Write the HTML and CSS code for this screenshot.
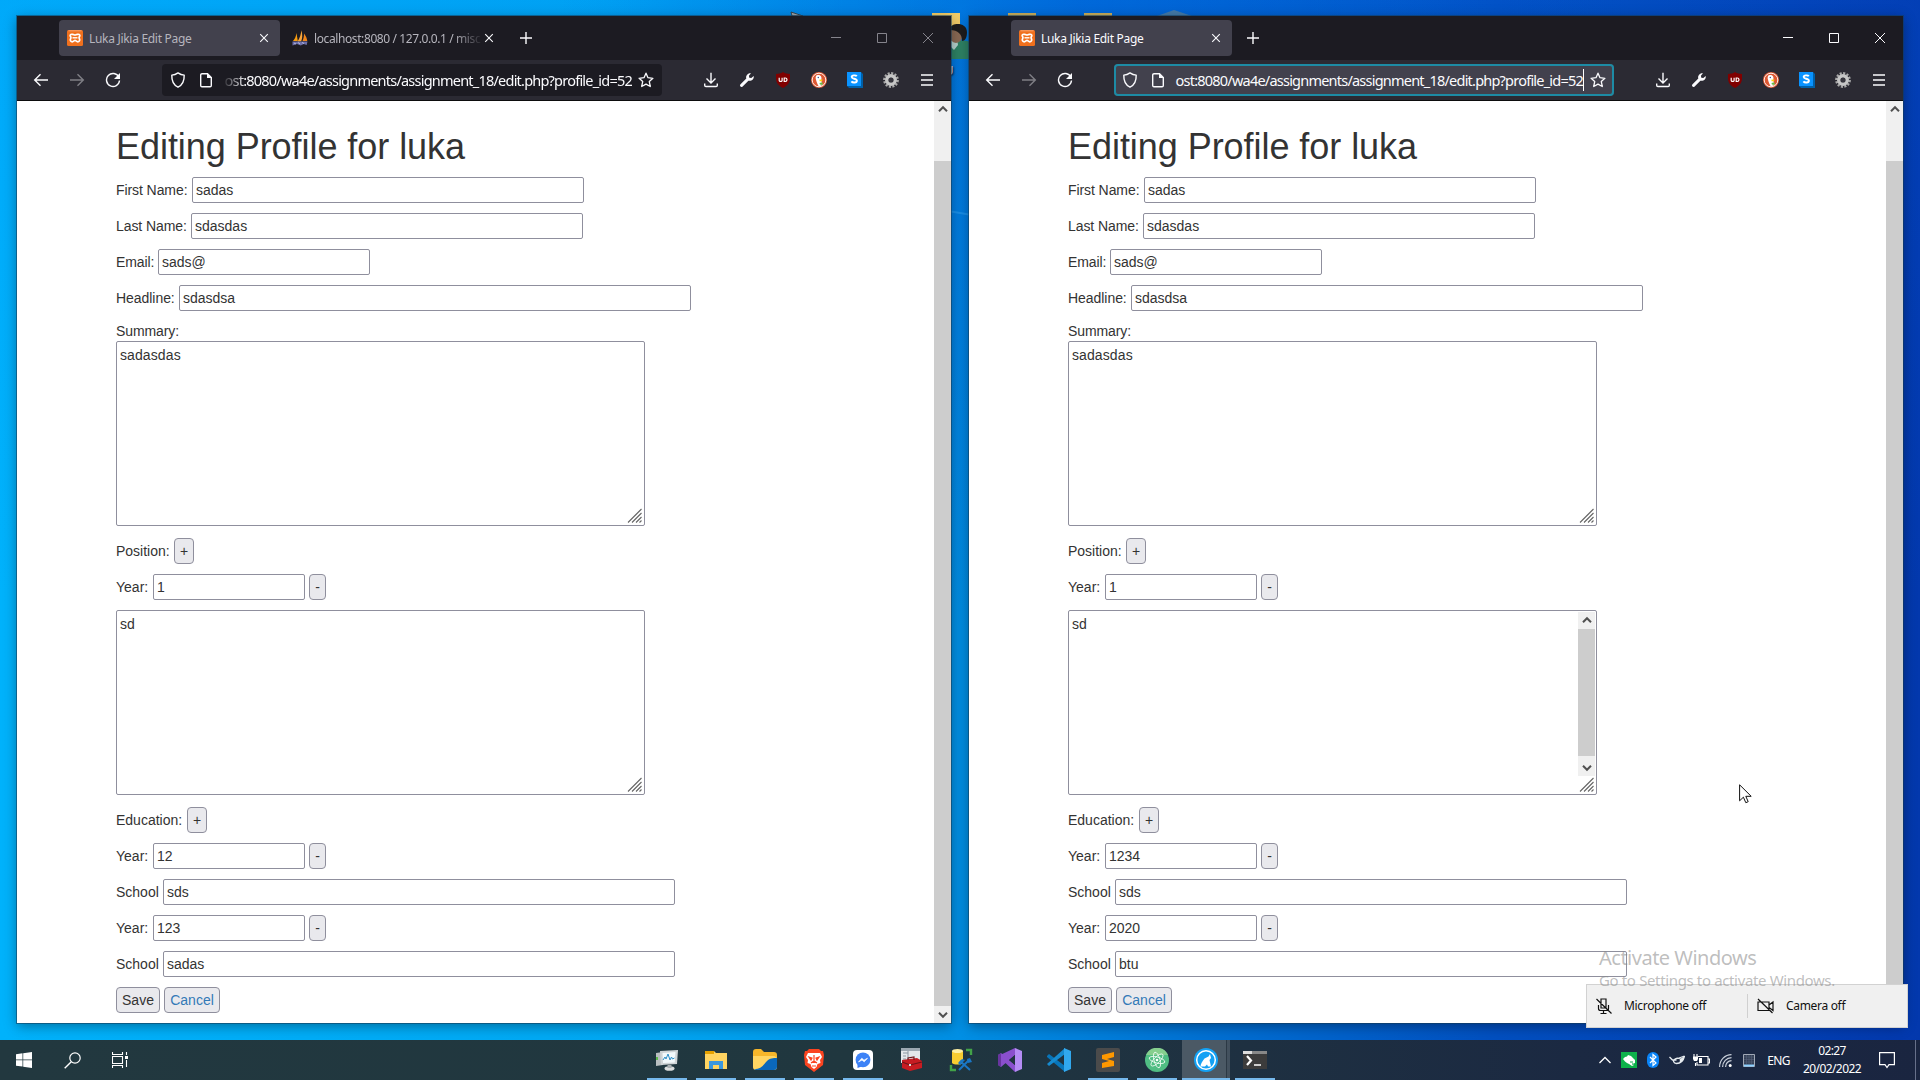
FILE: index.html
```html
<!DOCTYPE html>
<html lang="en">
<head>
<meta charset="utf-8">
<title>Desktop</title>
<link rel="stylesheet" href="styles.css">
</head>
<body>
<svg class="defs" aria-hidden="true">
  <symbol id="xampp" viewBox="0 0 16 16"><rect width="16" height="16" rx="1.5" fill="#f0701d"/><path d="M1.5.8h13" stroke="#f9b388" stroke-width=".8"/><path d="M4.600 4.300h1.200c1 0 1.400.7 2.200.7s1.200-.7 2.200-.7h1.200c1.200 0 1.700.9 1.300 1.800-.4.700-.9 1.200-.6 1.900 1.200 1.800.5 3.800-1.200 3.800-1.500 0-2.100-1.400-2.900-1.400s-1.400 1.400-2.900 1.400c-1.700 0-2.400-2-1.200-3.800.3-.7-.2-1.200-.6-1.900-.4-.9.1-1.800 1.300-1.800z" fill="none" stroke="#fff" stroke-width="1.700"/><path d="M5.500 7.800h5" stroke="#fff" stroke-width="1.400"/></symbol>
  <symbol id="pma" viewBox="0 0 16 16"><path d="M1 11C3 9 4 6 4.500 3l1.300 8z" fill="#f89c0e"/><path d="M5.500 11.500C8 8 9 4 9.300.3c1.400 4 1.200 8-.1 11z" fill="#f9a63a"/><path d="M10.500 11c1.200-3 1.600-5 1.500-7.500 2 2.500 3 5 3.300 7.500z" fill="#f0861a"/><path d="M.5 11.500h15l-.8 3.500-3-1-3 1.500L5 14l-4.500 1.500z" fill="#6d6fa8"/><path d="M2 13l2 1M6 12.500l2 1.500M10 12.500l2 1" stroke="#c9cae8" stroke-width=".8"/></symbol>
  <symbol id="x" viewBox="0 0 16 16"><path d="M4.200 4.200l7.600 7.600M11.800 4.200l-7.600 7.600" stroke="currentColor" stroke-width="1.100"/></symbol>
  <symbol id="plus" viewBox="0 0 16 16"><path d="M8 2v12M2 8h12" stroke="currentColor" stroke-width="1.400"/></symbol>
  <symbol id="min" viewBox="0 0 16 16"><path d="M3 7.500h10" stroke="currentColor"/></symbol>
  <symbol id="max" viewBox="0 0 16 16"><path d="M3.500 3.500h9v9h-9z" fill="none" stroke="currentColor"/></symbol>
  <symbol id="close" viewBox="0 0 16 16"><path d="M3 3l10 10M13 3L3 13" stroke="currentColor"/></symbol>
  <symbol id="back" viewBox="0 0 16 16"><path d="M15 8H1.700M7.500 2.200L1.700 8l5.800 5.800" fill="none" stroke="currentColor" stroke-width="1.400"/></symbol>
  <symbol id="reload" viewBox="0 0 16 16"><path d="M13.800 5A6.500 6.500 0 1 0 14.500 8.500" fill="none" stroke="currentColor" stroke-width="1.400"/><path d="M15 1v6H9z" fill="currentColor"/></symbol>
  <symbol id="shield" viewBox="0 0 16 16"><path d="M8 .9C6 2.300 4 3 1.800 3.100 1.600 9 3.500 13.200 8 15.200c4.500-2 6.400-6.200 6.200-12.100C12 3 10 2.300 8 .9z" fill="none" stroke="currentColor" stroke-width="1.400" stroke-linejoin="round"/></symbol>
  <symbol id="page" viewBox="0 0 16 16"><path d="M9.500 1.700H4A1.300 1.300 0 0 0 2.700 3v10.500c0 .7.600 1.200 1.300 1.200h8c.7 0 1.300-.5 1.300-1.200v-8z" fill="none" stroke="currentColor" stroke-width="1.400"/><path d="M9 1v5h5z" fill="currentColor"/></symbol>
  <symbol id="star" viewBox="0 0 16 16"><path d="M8 1.200l2 4.500 4.900.6-3.600 3.300 1 4.900L8 12.100l-4.300 2.400 1-4.900L1.100 6.300 6 5.700z" fill="none" stroke="currentColor" stroke-width="1.300" stroke-linejoin="round"/></symbol>
  <symbol id="down" viewBox="0 0 16 16"><path d="M8 .8v10M3.500 6.500L8 11l4.500-4.500M1.700 11.500v1.800c0 .7.500 1.200 1.200 1.200h10.200c.7 0 1.200-.5 1.200-1.200v-1.800" fill="none" stroke="currentColor" stroke-width="1.400"/></symbol>
  <symbol id="wrench" viewBox="0 0 16 16"><path d="M1.300 12.600l6-6C6.500 3.500 9 .7 12 1.300L9.900 3.700l.4 2 2 .4 2.400-2.100c.6 3-2.200 5.500-5.300 4.700l-6 6a1.500 1.500 0 0 1-2.100-2.100z" fill="currentColor"/></symbol>
  <symbol id="ublock" viewBox="0 0 16 16"><path d="M8 0c2 1.500 4.500 1.700 7 2v4.500c0 4.500-3 7.500-7 9.500-4-2-7-5-7-9.500V2c2.500-.3 5-.5 7-2z" fill="#800000"/><path d="M4.200 5.800v2.600c0 1.400 2.900 1.400 2.900 0V5.800M9.200 6v3.500h1c2.400 0 2.400-3.500 0-3.500z" fill="none" stroke="#fff" stroke-width="1.200"/></symbol>
  <symbol id="ddg" viewBox="0 0 16 16"><circle cx="8" cy="8" r="8" fill="#de5833"/><circle cx="8" cy="8" r="6.800" fill="none" stroke="#fff" stroke-width=".9"/><path d="M5 4c1-1.500 4.500-1.500 5.300 1 .6 2-.5 3 .2 4.500l1 3.500-3.700 1.500C6 11.500 5 8 4.600 6z" fill="#fff"/><path d="M8.500 7.500l3.500.3-1.500 1.400-2 .1z" fill="#fdd20a"/><path d="M8.500 11l3-.8v2.800l-2.600-.5z" fill="#65bc46"/><circle cx="7.300" cy="5.500" r=".7" fill="#2d4f8e"/></symbol>
  <symbol id="sblue" viewBox="0 0 16 16"><path d="M0 0h14l2 2v14H2l-2-2z" fill="#0060a8"/><path d="M0 0h14v14H0z" fill="#0a93ff"/><path d="M9.800 4.200C9 3 4.700 2.900 4.700 5c0 2.300 5.200 1.200 5.200 3.800 0 2.200-4.300 2.200-5.500.6" fill="none" stroke="#fff" stroke-width="1.900"/></symbol>
  <symbol id="gear" viewBox="0 0 16 16"><circle cx="8" cy="8" r="6.700" fill="none" stroke="#a9a9a9" stroke-width="2.400" stroke-dasharray="2.100 1.400"/><circle cx="8" cy="8" r="4.300" fill="none" stroke="#c6c6c6" stroke-width="3.400"/><circle cx="8" cy="8" r="2.200" fill="#38373f"/></symbol>
  <symbol id="menu" viewBox="0 0 16 16"><path d="M2 3h12M2 8h12M2 13h12" stroke="currentColor" stroke-width="1.400"/></symbol>
  <symbol id="up" viewBox="0 0 10 8"><path d="M1 6.200l4-4 4 4" fill="none" stroke="#505050" stroke-width="2"/></symbol>
  <symbol id="dn" viewBox="0 0 10 8"><path d="M1 1.800l4 4 4-4" fill="none" stroke="#505050" stroke-width="2"/></symbol>
  <symbol id="grip" viewBox="0 0 15 15"><path d="M1 14.500L14.500 1M5 14.500L14.500 5M9 14.500L14.500 9M12.500 14.500l2-2" stroke="#666" stroke-width="1.100"/></symbol>
</svg>

<div class="desktop">
  <div class="desk-icons">
    <svg width="180" height="90" viewBox="0 0 180 90" overflow="visible">
      <path d="M6 12l12 4H7z" fill="#9aa7b0" stroke="#333" stroke-width=".8"/>
      <path d="M147 13h28v30h-28z" fill="#f3cd68"/>
      <path d="M223 13h28v8h-28z" fill="#c9ae5c"/>
      <path d="M163 59v-13c4-7 22-7 24-2l2 15z" fill="#2f8466"/><path d="M165 46l4 4 4-5-1-6h-7z" fill="#b7d4cf"/><ellipse cx="171" cy="34" rx="7" ry="9" fill="#8c6b56"/><path d="M165 28c2-6 17-6 17 4 0 6-2 9-5 9 0-7-4-11-12-11z" fill="#1f1d1e"/>
    </svg>
    <span class="desk-label">U</span>
  </div>
  <div class="desk-icons right-icons"><svg width="180" height="20" viewBox="0 0 180 20"><path d="M18 13h28v6H18z" fill="#c9ae5c"/><path d="M91 16l17-6 18 6v4H91z" fill="#447aa8"/></svg></div>
  <div class="ray"></div>

  <section class="window first">
    <header class="tabs">
      <div class="tab active"><svg class="i16"><use href="#xampp"/></svg><span class="tab-title">Luka Jikia Edit Page</span><svg class="i16"><use href="#x"/></svg></div>
      <div class="tab"><svg class="i16"><use href="#pma"/></svg><span class="tab-title cut">localhost:8080 / 127.0.0.1 / misc</span><svg class="i16"><use href="#x"/></svg></div>
      <svg class="i16 newtab"><use href="#plus"/></svg>
      <div class="controls"><svg class="i16"><use href="#min"/></svg><svg class="i16"><use href="#max"/></svg><svg class="i16"><use href="#close"/></svg></div>
    </header>
    <nav class="toolbar">
      <span class="slot"><svg class="i16"><use href="#back"/></svg></span><span class="slot off flip"><svg class="i16"><use href="#back"/></svg></span><span class="slot"><svg class="i16"><use href="#reload"/></svg></span>
      <div class="url"><svg class="i16"><use href="#shield"/></svg><svg class="i16 page-ic"><use href="#page"/></svg><div class="address"><span>ost:8080/wa4e/assignments/assignment_18/edit.php?profile_id=52</span></div><svg class="i16"><use href="#star"/></svg></div>
      <span class="slot"><svg class="i16"><use href="#down"/></svg></span><span class="slot"><svg class="i16"><use href="#wrench"/></svg></span><span class="slot"><svg class="i16"><use href="#ublock"/></svg></span><span class="slot"><svg class="i16"><use href="#ddg"/></svg></span><span class="slot"><svg class="i16"><use href="#sblue"/></svg></span><span class="slot"><svg class="i16"><use href="#gear"/></svg></span><span class="slot"><svg class="i16"><use href="#menu"/></svg></span>
    </nav>
    <div class="body">
      <main class="form">
        <h1>Editing Profile for luka</h1>
        <div class="row"><label class="l-first">First Name:</label><div class="field name">sadas</div></div>
        <div class="row"><label class="l-last">Last Name:</label><div class="field name">sdasdas</div></div>
        <div class="row"><label class="l-email">Email:</label><div class="field email">sads@</div></div>
        <div class="row"><label class="l-head">Headline:</label><div class="field long">sdasdsa</div></div>
        <div class="caption">Summary:</div>
        <div class="area">sadasdas<svg class="grip"><use href="#grip"/></svg></div>
        <div class="row after"><label class="l-pos">Position:</label><div class="btn add">+</div></div>
        <div class="row"><label class="l-year">Year:</label><div class="field year">1</div><div class="btn del">-</div></div>
        <div class="area spaced">sd<svg class="grip"><use href="#grip"/></svg></div>
        <div class="row after"><label class="l-edu">Education:</label><div class="btn add">+</div></div>
        <div class="row"><label class="l-year">Year:</label><div class="field year">12</div><div class="btn del">-</div></div>
        <div class="row"><label class="l-school">School</label><div class="field long">sds</div></div>
        <div class="row"><label class="l-year">Year:</label><div class="field year">123</div><div class="btn del">-</div></div>
        <div class="row"><label class="l-school">School</label><div class="field long">sadas</div></div>
        <div class="row"><div class="btn save">Save</div><div class="btn cancel">Cancel</div></div>
      </main>
      <aside class="scroll"><svg class="arrow"><use href="#up"/></svg><div class="thumb"></div><svg class="arrow"><use href="#dn"/></svg></aside>
    </div>
  </section>

  <section class="window second">
    <header class="tabs">
      <div class="tab active"><svg class="i16"><use href="#xampp"/></svg><span class="tab-title">Luka Jikia Edit Page</span><svg class="i16"><use href="#x"/></svg></div>
      <svg class="i16 newtab"><use href="#plus"/></svg>
      <div class="controls"><svg class="i16"><use href="#min"/></svg><svg class="i16"><use href="#max"/></svg><svg class="i16"><use href="#close"/></svg></div>
    </header>
    <nav class="toolbar">
      <span class="slot"><svg class="i16"><use href="#back"/></svg></span><span class="slot off flip"><svg class="i16"><use href="#back"/></svg></span><span class="slot"><svg class="i16"><use href="#reload"/></svg></span>
      <div class="url focus"><svg class="i16"><use href="#shield"/></svg><svg class="i16 page-ic"><use href="#page"/></svg><div class="address caret"><span>ost:8080/wa4e/assignments/assignment_18/edit.php?profile_id=52</span></div><svg class="i16"><use href="#star"/></svg></div>
      <span class="slot"><svg class="i16"><use href="#down"/></svg></span><span class="slot"><svg class="i16"><use href="#wrench"/></svg></span><span class="slot"><svg class="i16"><use href="#ublock"/></svg></span><span class="slot"><svg class="i16"><use href="#ddg"/></svg></span><span class="slot"><svg class="i16"><use href="#sblue"/></svg></span><span class="slot"><svg class="i16"><use href="#gear"/></svg></span><span class="slot"><svg class="i16"><use href="#menu"/></svg></span>
    </nav>
    <div class="body">
      <main class="form">
        <h1>Editing Profile for luka</h1>
        <div class="row"><label class="l-first">First Name:</label><div class="field name">sadas</div></div>
        <div class="row"><label class="l-last">Last Name:</label><div class="field name">sdasdas</div></div>
        <div class="row"><label class="l-email">Email:</label><div class="field email">sads@</div></div>
        <div class="row"><label class="l-head">Headline:</label><div class="field long">sdasdsa</div></div>
        <div class="caption">Summary:</div>
        <div class="area">sadasdas<svg class="grip"><use href="#grip"/></svg></div>
        <div class="row after"><label class="l-pos">Position:</label><div class="btn add">+</div></div>
        <div class="row"><label class="l-year">Year:</label><div class="field year">1</div><div class="btn del">-</div></div>
        <div class="area spaced scrolling"><span>sd</span><div class="inner-scroll"><svg class="arrow"><use href="#up"/></svg><div class="thumb"></div><svg class="arrow"><use href="#dn"/></svg></div><svg class="grip"><use href="#grip"/></svg></div>
        <div class="row after"><label class="l-edu">Education:</label><div class="btn add">+</div></div>
        <div class="row"><label class="l-year">Year:</label><div class="field year">1234</div><div class="btn del">-</div></div>
        <div class="row"><label class="l-school">School</label><div class="field long">sds</div></div>
        <div class="row"><label class="l-year">Year:</label><div class="field year">2020</div><div class="btn del">-</div></div>
        <div class="row"><label class="l-school">School</label><div class="field long">btu</div></div>
        <div class="row"><div class="btn save">Save</div><div class="btn cancel">Cancel</div></div>
      </main>
      <aside class="scroll"><svg class="arrow"><use href="#up"/></svg><div class="thumb"></div><svg class="arrow"><use href="#dn"/></svg></aside>
    </div>
  </section>

  <div class="toast">
    <div class="toast-item mic"><svg width="16" height="16" viewBox="0 0 16 16"><path d="M5 1h5v9H5zM2.500 7v3.500c0 1 1 2 2 2h6c1 0 2-1 2-2V7M7.500 12.500v3M4.500 15.500h6M.5 1l15 14.500" fill="none" stroke="#111" stroke-width="1.200"/></svg><span>Microphone off</span></div>
    <div class="toast-item cam"><svg width="17" height="16" viewBox="0 0 17 16"><path d="M1 4h11v8.500H1zM12 7l4-3v8.500l-4-3M1 1l14.500 14" fill="none" stroke="#111" stroke-width="1.200"/></svg><span>Camera off</span></div>
  </div>
  <div class="activate"><div class="act-title">Activate Windows</div><div class="act-sub">Go to Settings to activate Windows.</div></div>
  <svg class="cursor" width="14" height="20" viewBox="0 0 14 20"><path d="M.6.8v16l3.800-3.600 2.400 5.500 2.400-1-2.400-5.400h5.400z" fill="#fff" stroke="#111" stroke-width="1"/></svg>
</div>

<footer class="taskbar">
  <div class="sys">
    <span><svg width="16" height="16" viewBox="0 0 16 16"><path d="M0 2.200l6.500-.9v6.200H0zM7.200 1.200L16 0v7.500H7.200zM0 8.300h6.500v6.300L0 13.800zM7.200 8.300H16V16l-8.800-1.200z" fill="#fff"/></svg></span>
    <span><svg width="17" height="17" viewBox="0 0 17 17"><circle cx="11" cy="6" r="5.200" fill="none" stroke="#fff" stroke-width="1.200"/><path d="M7.300 9.700L.7 16.300" stroke="#fff" stroke-width="1.400"/></svg></span>
    <span><svg width="17" height="16" viewBox="0 0 17 16"><path d="M.5 0v2.500h10V0M.5 4.500h10v7H.5zM.5 16v-2.500h10V16M14.500 0v3M14.500 8v7" fill="none" stroke="#fff" stroke-width="1.100"/><path d="M13 4h3v3h-3z" fill="#fff"/></svg></span>
  </div>
  <div class="apps">
    <span class="app run"><svg width="24" height="24" viewBox="0 0 24 24"><path d="M1 5l7-1v13l-7 1z" fill="#b9bfc1"/><path d="M5 3l18-1-1 14-16 1z" fill="#cfd4d6"/><path d="M7.500 5l13-1-.8 10.500-11.700.5z" fill="#f2f9fb"/><path d="M8 12l2-3 1 2 2-5 2 6 1.500-3 1 2 2-1" fill="none" stroke="#2f8fc8"/><ellipse cx="14.500" cy="20.500" rx="5" ry="2.300" fill="#dadddd"/><path d="M12.500 17h4v3h-4z" fill="#a9afb2"/><path d="M1 9h2v3H1z" fill="#5bb94a"/></svg></span>
    <span class="app run"><svg width="24" height="24" viewBox="0 0 24 24"><path d="M1 3h9l2 2h11v16H1z" fill="#ffd461"/><path d="M1 3h9v3H1z" fill="#e6a100"/><path d="M5 21v-8h14v8h-4v-4H9v4z" fill="#3b97dd"/></svg></span>
    <span class="app run"><svg width="24" height="24" viewBox="0 0 24 24"><path d="M0 4c0-2 1-3 3-3h5l3 3h10c2 0 3 1 3 3v8H0z" fill="#f6b62a"/><path d="M0 8h20c3 0 4 2 4 4v7c0 2-1 3-3 3H3c-2 0-3-1-3-3z" fill="#ffd562"/><path d="M1 21c8 0 9-4 13-8 3-3 6-3 10-3v9c0 2-1 3-3 3H3z" fill="#0a68bb"/></svg></span>
    <span class="app run"><svg width="22" height="24" viewBox="0 0 22 24"><path d="M6 1h10l2 2h2l1 4-1 10-9 7-9-7L1 7l1-4h2z" fill="#fb4420"/><path d="M5 5h12l2 4-2 3 .5 3-3 1-1 3-2.500 2-2.500-2-1-3-3-1 .5-3L3 9z" fill="#fff"/><path d="M6 9l3 1-1 2zM16 9l-3 1 1 2zM11 7v6M8 15l3-2 3 2M9 18h4" fill="#fb4420" stroke="#fb4420" stroke-width="1.200"/></svg></span>
    <span class="app run"><svg width="20" height="20" viewBox="0 0 20 20"><rect width="20" height="20" rx="4" fill="#fff"/><path d="M4.500 14v4l4-1.500z" fill="#3a76ef"/><circle cx="10" cy="9.800" r="7.400" fill="#3d82f6"/><path d="M5.500 12l3.300-3.700 2.200 1.900 3.500-2-3.300 3.600L9 10z" fill="#fff" stroke="#fff" stroke-width=".7"/></svg></span>
    <span class="app"><svg width="24" height="24" viewBox="0 0 24 24"><path d="M1 0h19v15H1z" fill="#e4e8ea"/><path d="M1 0h19v3H1z" fill="#9ca8b1"/><path d="M3 5h5M3 8h3M3 11h3M8 3v8" stroke="#8a98a3"/><path d="M2 12l15-2 5 3v7l-12 3-8-3z" fill="#c71c22"/><path d="M2 14l8 3 12-3M8 12v-2l6-1v3" fill="none" stroke="#6b1519" stroke-width="1.100"/><path d="M9 16h2v2H9z" fill="#ddd"/></svg></span>
    <span class="app"><svg width="24" height="24" viewBox="0 0 24 24"><path d="M3 3v12c2 2 9 2 11 0V3z" fill="#f8cd31"/><ellipse cx="8.500" cy="3" rx="5.500" ry="2" fill="#fff0a2"/><path d="M17 2h5v5M2 17v5h5" fill="none" stroke="#42a248" stroke-width="2.400"/><path d="M10 22l10-10M11 13l10 9" stroke="#1976c5" stroke-width="2"/><path d="M9 15l4-4 3 1-5 5zM18 11l1 4 4-1-2-4z" fill="#1976c5"/></svg></span>
    <span class="app"><svg width="24" height="24" viewBox="0 0 24 24"><path d="M17 0l7 3v18l-7 3z" fill="#b58cf4"/><path d="M17 0v7L3 19l-3-2V7l3-2 14 12v7L0 8z" fill="#8a4fcd"/><path d="M0 7l3-2v14l-3-2z" fill="#68359f"/><path d="M17 7v10l-6-5z" fill="#20323f"/></svg></span>
    <span class="app"><svg width="24" height="24" viewBox="0 0 24 24"><path d="M0 8l2-2 16 12v6L0 9z" fill="#0875b9"/><path d="M18 0v6L2 18l-2-2z" fill="#168bd0"/><path d="M17 0l7 3v18l-7 3z" fill="#31a8ee"/></svg></span>
    <span class="app run"><svg width="24" height="24" viewBox="0 0 24 24"><rect width="24" height="24" rx="2" fill="#4b4b4b"/><path d="M18 4v5l-7 2 7 2v5L6 20v-5l7-2-7-2V7z" fill="#ff9800"/></svg></span>
    <span class="app run"><svg width="24" height="24" viewBox="0 0 24 24"><circle cx="12" cy="12" r="12" fill="#50bd83"/><path d="M1 7a12 12 0 0 1 22 0z" fill="#86cf8e"/><g fill="none" stroke="#e8f8ee" stroke-width=".9"><ellipse cx="12" cy="12" rx="8" ry="3" transform="rotate(15 12 12)"/><ellipse cx="12" cy="12" rx="8" ry="3" transform="rotate(75 12 12)"/><ellipse cx="12" cy="12" rx="8" ry="3" transform="rotate(135 12 12)"/></g><circle cx="12" cy="12" r="1.300" fill="#fff"/></svg></span>
    <span class="app run current"><svg width="24" height="24" viewBox="0 0 24 24"><circle cx="12" cy="12" r="12" fill="#13a1f4"/><circle cx="12" cy="12" r="9.300" fill="none" stroke="#fff" stroke-width="1.500"/><path d="M6.500 18.500c0-3 2-5 4-8l4-2 1.500-2.500 1 4-1.500 2 1.500 6.500H14l-1-2-2 2z" fill="#fff"/></svg></span>
    <span class="app run"><svg width="24" height="18" viewBox="0 0 24 18"><path d="M0 0h24v18H0z" fill="#3c3c3c"/><path d="M0 0h24v3H0z" fill="#888"/><path d="M0 0h9v3H0z" fill="#ddd"/><path d="M4 5l4 4.500L4 14" fill="none" stroke="#fff" stroke-width="2.200"/><path d="M11 14h7" stroke="#fff" stroke-width="1.500"/></svg></span>
  </div>
  <div class="tray">
    <span><svg width="12" height="8" viewBox="0 0 12 8"><path d="M.5 7L6 1.500 11.500 7" fill="none" stroke="#fff" stroke-width="1.300"/></svg></span>
    <span><svg width="16" height="16" viewBox="0 0 16 16"><path d="M0 0h16v16H0z" fill="#0db14b"/><path d="M2 7l2-2 2-.5L7 3l3 1 3 3 1 1v3l-3 1 2 1-2 1-3-2-2-1-2-1.500z" fill="#fff"/><path d="M9 10h3M11 12h1" stroke="#0db14b"/></svg></span>
    <span><svg width="12" height="16" viewBox="0 0 12 16"><rect width="12" height="16" rx="6" fill="#0a84f8"/><path d="M3 5l6 6-3 2.500v-11L9 5l-6 6" fill="none" stroke="#fff" stroke-width="1.200"/></svg></span>
    <span><svg width="16" height="10" viewBox="0 0 16 10"><path d="M.5 2l3 3h4M15.500 1c-1 5-4 7.500-8 7.500-3 0-4-3-1.500-4.500 3-1.500 6-.5 6 1.500M10 3l5.500-2" fill="none" stroke="#e6ebef" stroke-width="1.300"/><path d="M11 4l4.500-3-2 5-3 2z" fill="#e6ebef"/></svg></span>
    <span><svg width="17" height="12" viewBox="0 0 17 12"><path d="M5 2.500h10v8.500H4V8M15 5h1.500v4H15M2.500 9v3M1 0v3M4 0v3" fill="none" stroke="#fff" stroke-width="1.100"/><path d="M0 2.500h5V5l-1 2H1L0 5zM6 4h3v5H6z" fill="#fff"/></svg></span>
    <span><svg width="13" height="13" viewBox="0 0 13 13"><path d="M.6 13C.6 6 6 .6 12.500.6M3.600 13c0-5 4-9.400 8.900-9.400M6.600 13c0-3.500 2.500-6.400 5.900-6.400" fill="none" stroke="#c9d0da" stroke-width="1.200"/><circle cx="11.200" cy="11.500" r="1.500" fill="#fff"/></svg></span>
    <span><svg width="12" height="13" viewBox="0 0 12 13"><path d="M.5.500h11v12H.5z" fill="#343f55" stroke="#aeb5c2" stroke-width=".9"/><path d="M1 10.500h10v2H1z" fill="#8dd1ff"/><path d="M1 3h10M1 5.500h10M1 8h10M3.500 1v9M6 1v9M8.500 1v9" stroke="#56617a" stroke-width=".6"/></svg></span>
    <span class="lang">ENG</span>
    <div class="clock"><div>02:27</div><div class="date">20/02/2022</div></div>
    <svg class="note" width="16" height="17" viewBox="0 0 16 17"><path d="M.6.600h14.800v12H10L8 15.500l-2-2.900H.6z" fill="none" stroke="#fff" stroke-width="1.200"/></svg>
  </div>
</footer>
</body>
</html>
```
FILE: styles.css
```css
* { box-sizing: border-box; }
body {
  margin: 0;
  width: 1920px;
  height: 1080px;
  overflow: hidden;
  display: flex;
  flex-direction: column;
  font-family: "Noto Sans", "Open Sans", sans-serif;
}
.defs { position: absolute; width: 0; height: 0; }
.i16 { width: 16px; height: 16px; flex: none; }

.desktop {
  position: relative;
  height: 1040px;
  background:
    radial-gradient(ellipse 520px 650px at 1080px 0, rgba(0, 70, 210, .38), rgba(0, 70, 210, 0)),
    linear-gradient(to bottom, rgba(0, 110, 240, .13), rgba(0, 110, 225, 0) 600px),
    linear-gradient(90deg, #00b2fb 0, #00a8f3 32%, #008fe4 50%, #0072d4 62%, #024fc0 78%, #0338ad 100%);
}
.desk-icons { position: absolute; left: 785px; top: 0; }
.right-icons { left: 1066px; }
.desk-label { position: absolute; left: 159px; top: 61px; color: #fff; font-size: 13px; text-shadow: 1px 1px 2px #000; }
.ray { position: absolute; left: 951px; top: 212px; width: 18px; height: 2px; background: #1a90ea; transform: rotate(10deg); }

.window {
  position: absolute;
  top: 16px;
  width: 934px;
  height: 1007px;
  display: flex;
  flex-direction: column;
  box-shadow: 0 0 0 1px rgba(20, 60, 90, .55), 0 3px 12px rgba(0, 0, 0, .38);
}
.first { left: 17px; }
.second { left: 969px; }
.tabs { height: 44px; background: #1c1b22; display: flex; align-items: center; padding: 0 15px 0 42px; gap: 4px; color: #fbfbfe; }
.tab { width: 221px; height: 36px; border-radius: 4px; display: flex; align-items: center; padding: 0 8px; }
.tab.active { background: #42414d; }
.tab-title { flex: 1; margin: 1px 4px 0 6px; font-size: 12px; letter-spacing: -.3px; white-space: nowrap; overflow: hidden; }
.first .tab-title { color: #b6b5bd; }
.first .cut {
  margin-right: -3px;
  letter-spacing: -.4px;
  -webkit-mask-image: linear-gradient(90deg, #000 82%, transparent 100%);
  mask-image: linear-gradient(90deg, #000 82%, transparent 100%);
}
.newtab { margin-left: 9px; }
.controls { margin-left: auto; display: flex; gap: 30px; }
.first .controls { color: #85848c; }
.toolbar { height: 41px; background: #2b2a33; border-bottom: 1px solid #0c0c0d; display: flex; align-items: center; padding: 0 6px; color: #fbfbfe; }
.slot { width: 36px; display: flex; justify-content: center; }
.off { opacity: .4; }
.flip { transform: scaleX(-1); }
.url { width: 500px; height: 32px; margin: 0 31px; padding: 0 8px; background: #1c1b22; border-radius: 4px; display: flex; align-items: center; flex: none; }
.url.focus { background: #42414d; box-shadow: inset 0 0 0 2px #1d8ba5; }
.page-ic { margin: 0 10px 0 12px; }
.address {
  width: 410px;
  margin-left: -2px;
  margin-right: 6px;
  display: flex;
  justify-content: flex-end;
  overflow: hidden;
  white-space: nowrap;
  font-size: 14.500px;
  line-height: 22px;
  letter-spacing: -.78px;
  -webkit-mask-image: linear-gradient(90deg, transparent, #000 24px);
  mask-image: linear-gradient(90deg, transparent, #000 24px);
}
.address.caret { border-right: 1px solid #fff; -webkit-mask-image: none; mask-image: none; }

.body { flex: 1; display: flex; background: #fff; min-height: 0; }
.form { flex: 1; padding: 26px 0 0 99px; font: 14px/20px "Liberation Sans", Arial, sans-serif; color: #333; }
h1 { margin: 0; font-size: 36px; line-height: 40px; font-weight: 400; letter-spacing: -.05px; }
.row { display: flex; align-items: center; height: 26px; gap: 4px; margin-top: 10px; }
.row label { flex: none; white-space: nowrap; }
.l-first { width: 72px; letter-spacing: -.08px; }
.l-last { width: 71px; letter-spacing: -.08px; }
.l-email { width: 38px; letter-spacing: -.1px; }
.l-head { width: 59px; letter-spacing: -.05px; }
.l-pos { width: 54px; }
.l-year { width: 33px; }
.l-edu { width: 67px; }
.l-school { width: 43px; }
.after { margin-top: 12px; }
.field { height: 26px; border: 1px solid #8f8f9d; border-radius: 2px; padding: 2px 3px; white-space: nowrap; }
.name { width: 392px; }
.email { width: 212px; }
.long { width: 512px; }
.year { width: 152px; }
.btn { height: 26px; border: 1px solid #8f8f9d; border-radius: 4px; background: #e9e9ed; display: flex; justify-content: center; align-items: center; }
.add { width: 20px; }
.del { width: 17px; }
.save { width: 44px; }
.cancel { width: 56px; color: #337ab7; }
.caption { margin-top: 10px; letter-spacing: -.1px; }
.area { position: relative; width: 529px; height: 185px; border: 1px solid #8f8f9d; border-radius: 2px; padding: 3px; letter-spacing: .1px; }
.spaced { margin-top: 10px; }
.grip { position: absolute; right: 2px; bottom: 2px; width: 15px; height: 15px; }
.scroll { width: 17px; background: #f0f0f0; display: flex; flex-direction: column; align-items: center; padding: 4px 0; }
.scroll .thumb { width: 17px; height: 845px; margin: 48px 0 5px; background: #cdcdcd; flex: none; }
.arrow { width: 10px; height: 8px; flex: none; }
.scrolling { display: flex; justify-content: space-between; padding-right: 1px; padding-top: 0; }
.scrolling > span { padding-top: 3px; }
.inner-scroll { width: 17px; height: 164px; margin-top: 1px; background: #f0f0f0; display: flex; flex-direction: column; align-items: center; padding-top: 4px; }
.inner-scroll .thumb { width: 17px; height: 127px; margin: 5px 0 8px; background: #cdcdcd; }

.toast { position: absolute; left: 1586px; top: 984px; width: 322px; height: 44px; background: #f0f0f0; border: 1px solid #d2d2d2; display: flex; align-items: center; font-size: 12px; letter-spacing: -.32px; color: #111; }
.toast-item { display: flex; align-items: center; }
.toast-item span { padding-bottom: 1px; }
.mic { width: 161px; height: 24px; padding-left: 9px; gap: 12px; border-right: 1px solid #d0d0d0; }
.cam { padding-left: 9px; gap: 12px; }
.activate { position: absolute; left: 1599px; top: 944px; color: rgba(135, 135, 135, .55); white-space: nowrap; }
.act-title { font-size: 20px; line-height: 28px; letter-spacing: -.5px; }
.act-sub { font-size: 15px; line-height: 16px; letter-spacing: -.36px; }
.cursor { position: absolute; left: 1739px; top: 784px; }

.taskbar { position: relative; height: 40px; display: flex; background: linear-gradient(90deg, #22383f 0, #20373f 45%, #1e3041 65%, #1b2942 82%, #1a2540 100%); color: #fff; }
.sys { display: flex; width: 647px; }
.sys span { width: 48px; display: flex; align-items: center; justify-content: center; }
.apps { display: flex; gap: 9px; }
.app { width: 40px; height: 40px; display: flex; align-items: center; justify-content: center; border-bottom: 2px solid transparent; padding-top: 1px; }
.run { border-bottom-color: #76b9ed; }
.current { width: 48px; margin: 0 -4px; background: linear-gradient(90deg, #4b5965 44px, #2c3945 44px, #2c3945 45px, #43515e 45px); }
.tray { margin-left: auto; display: flex; align-items: center; width: 327px; font-size: 12px; }
.tray > span { width: 24px; display: flex; justify-content: center; flex: none; }
.tray > .lang { width: 36px; letter-spacing: -.7px; padding-right: 1px; }
.clock { width: 70px; text-align: center; line-height: 18px; letter-spacing: -.6px; }
.note { margin-left: 12px; }
.taskbar::after { content: ""; position: absolute; right: 4px; top: 0; width: 1px; height: 40px; background: #67708a; }
```
